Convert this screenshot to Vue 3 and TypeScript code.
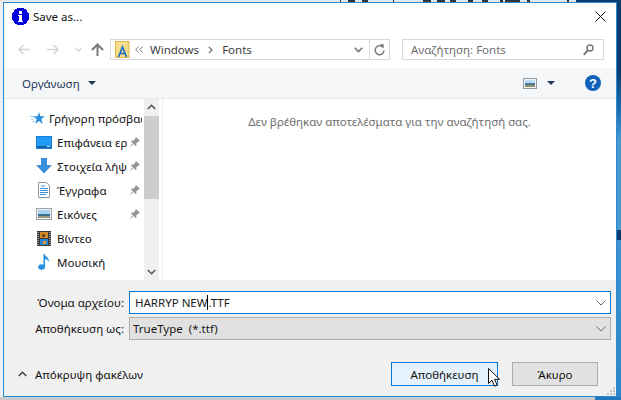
<script setup lang="ts">
interface NavItem {
  label: string;
  icon: string;
  pinned: boolean;
}

const navItems: NavItem[] = [
  { label: "Επιφάνεια εργασίας", icon: "desktop", pinned: true },
  { label: "Στοιχεία λήψης", icon: "download", pinned: true },
  { label: "Έγγραφα", icon: "docs", pinned: true },
  { label: "Εικόνες", icon: "pics", pinned: true },
  { label: "Βίντεο", icon: "video", pinned: false },
  { label: "Μουσική", icon: "music", pinned: false },
];

// the window behind the dialog only peeks out along the top edge
const behindBits = [
  [340, 1], [348, 7], [362, 6], [393, 1], [423, 8], [437, 8], [450, 6],
  [468, 5], [482, 6], [500, 3], [505, 15], [527, 3],
];
</script>

<template>
  <div class="desktop">
    <svg class="behind" width="621" height="2" viewBox="0 0 621 2">
      <rect v-for="b in behindBits" :key="b[0]" :x="b[0]" y="0" :width="b[1]" height="2" fill="#333" />
    </svg>
    <div class="window">
      <div class="titlebar">
        <svg class="info-icon" width="17" height="17" viewBox="0 0 17 17" shape-rendering="crispEdges">
          <path fill="#0000e0" d="M5 0h7v1h2v1h1v2h1v1h1v7h-1v1h-1v2h-1v1h-2v1H5v-1H3v-1H2v-2H1v-1H0V5h1V4h1V2h1V1h2z" />
          <path fill="#fff" d="M7 3h3v3H7zM6 7h4v6h1v1H6v-1h1V8H6z" />
        </svg>
        <span class="title">Save as...</span>
        <svg class="close" width="11" height="11" viewBox="0 0 11 11">
          <path d="M.5.5l10 10M10.500.5l-10 10" stroke="#111" stroke-width="1" fill="none" />
        </svg>
      </div>

      <div class="navbar">
        <svg class="nav-arrow" width="13" height="11" viewBox="0 0 13 11">
          <path d="M13 5.500H2M6.500 1L2 5.500 6.500 10" stroke="#d5d5d5" stroke-width="1.600" fill="none" />
        </svg>
        <svg class="nav-arrow fwd" width="13" height="11" viewBox="0 0 13 11">
          <path d="M0 5.500h11M6.500 1L11 5.500 6.500 10" stroke="#d5d5d5" stroke-width="1.600" fill="none" />
        </svg>
        <svg class="nav-drop" width="7" height="5" viewBox="0 0 7 5">
          <path d="M.5 1l3 3 3-3" stroke="#d5d5d5" stroke-width="1.300" fill="none" />
        </svg>
        <svg class="nav-up" width="13" height="13" viewBox="0 0 13 13">
          <path d="M6.500 13V2M1 7l5.500-5.500L12 7" stroke="#7a7a7a" stroke-width="2" fill="none" />
        </svg>
        <div class="address">
          <svg class="fonts-icon" width="15" height="17" viewBox="0 0 15 17">
            <rect x=".5" y=".5" width="13.500" height="16" fill="#f7dc87" stroke="#e2b64a" stroke-width="1" />
            <path d="M3 3h1M6 3h1M9 3h1M4 6h1M8 6h1" stroke="#fff6d5" stroke-width="1" />
            <path d="M3.500 16L7.500 6l4 10M5.200 12.500h4.600" stroke="#1b6fc9" stroke-width="1.700" fill="none" />
          </svg>
          <svg class="crumbs-more" width="8" height="7" viewBox="0 0 8 7">
            <path d="M3.500.5L.8 3.500l2.700 3M7.500.5L4.800 3.500l2.700 3" stroke="#777" stroke-width="1" fill="none" />
          </svg>
          <span class="crumb">Windows</span>
          <svg class="crumb-sep" width="5" height="8" viewBox="0 0 5 8">
            <path d="M.8.8L4 4 .8 7.200" stroke="#666" stroke-width="1.200" fill="none" />
          </svg>
          <span class="crumb">Fonts</span>
          <span class="grow"></span>
          <svg class="addr-drop" width="9" height="6" viewBox="0 0 9 6">
            <path d="M.7.8l3.800 3.800L8.300.8" stroke="#777" stroke-width="1.600" fill="none" />
          </svg>
          <div class="refresh">
            <svg width="11" height="12" viewBox="0 0 11 12">
              <path d="M8.800 3.200A4.400 4.400 0 1 0 10 6.500" stroke="#7a7a7a" stroke-width="1.500" fill="none" />
              <path d="M5.500 0.300h4.200v4.200z" fill="#7a7a7a" />
            </svg>
          </div>
        </div>
        <div class="search">
          <span>Αναζήτηση: Fonts</span>
          <svg width="11" height="12" viewBox="0 0 11 12">
            <circle cx="7" cy="4" r="3" stroke="#777" stroke-width="1.500" fill="none" />
            <path d="M4.800 6.300L.8 10.800" stroke="#777" stroke-width="2" />
          </svg>
        </div>
      </div>

      <div class="toolbar">
        <span class="organize">Οργάνωση</span>
        <span class="caret organize-caret"></span>
        <span class="grow"></span>
        <svg class="view-icon" width="14" height="11" viewBox="0 0 14 11">
          <rect x=".5" y=".5" width="13" height="10" fill="#f2f5f8" stroke="#8f9aa3" />
          <rect x="2" y="2" width="10" height="3" fill="#bcdcf5" />
          <rect x="2" y="5" width="10" height="2" fill="#47799b" />
          <rect x="2" y="7" width="10" height="2" fill="#8f8d6c" />
        </svg>
        <span class="caret view-caret"></span>
        <svg class="help" width="16" height="16" viewBox="0 0 16 16">
          <circle cx="8" cy="8" r="8" fill="#0f62b8" />
          <text x="8" y="12.500" text-anchor="middle" class="help-mark">?</text>
        </svg>
      </div>

      <div class="browser">
        <div class="nav-pane">
          <div class="nav-list">
            <div class="nav-head">
              <svg width="15" height="13" viewBox="0 0 15 13">
                <path fill="#2b8fe0" d="M9 0l1.400 4.200H15l-3.700 2.700L12.700 12 9 9l-3.700 3 1.400-5.100L3 4.200h4.600z" />
                <path d="M0 4.500h4M1 7h3.500M2 9.500h3" stroke="#9fd0f5" stroke-width="1" />
              </svg>
              <span class="head-label">Γρήγορη πρόσβαση</span>
            </div>
            <div v-for="item in navItems" :key="item.label" class="nav-item">
              <span class="nav-icon">
                <svg v-if="item.icon === 'desktop'" width="16" height="13" viewBox="0 0 16 13">
                  <rect x="0" y="0" width="16" height="13" fill="#1a7fd8" />
                  <rect x="1" y="1" width="14" height="9" fill="#1f9bf5" />
                  <rect x="1" y="10" width="14" height="2" fill="#15609f" />
                  <rect x="11" y="10" width="3" height="1" fill="#bfe3fb" />
                </svg>
                <svg v-else-if="item.icon === 'download'" width="16" height="16" viewBox="0 0 16 16">
                  <path fill="#3a8fdc" d="M5 0h6v7h5l-8 8.500L0 7h5z" />
                </svg>
                <svg v-else-if="item.icon === 'docs'" width="12" height="16" viewBox="0 0 12 16">
                  <path d="M.5.5h8l3 3v12H.5z" fill="#fbfcfd" stroke="#8b98a3" />
                  <path d="M3 4h4M2 6.500h8M2 8.500h8M2 10.500h8M2 12.500h6" stroke="#3b8fd9" stroke-width="1" />
                </svg>
                <svg v-else-if="item.icon === 'pics'" width="16" height="12" viewBox="0 0 16 12">
                  <rect x=".5" y=".5" width="15" height="11" fill="#eef1f3" stroke="#9aa3a9" />
                  <rect x="2" y="2" width="12" height="4" fill="#a9d3f2" />
                  <rect x="2" y="6" width="12" height="2" fill="#3d6f8f" />
                  <rect x="2" y="8" width="12" height="2" fill="#9c9a78" />
                </svg>
                <svg v-else-if="item.icon === 'video'" width="14" height="15" viewBox="0 0 14 15">
                  <rect width="14" height="15" fill="#3a3a3a" />
                  <rect x="3" y="1" width="8" height="6" fill="#d78a2a" />
                  <rect x="3" y="8" width="8" height="6" fill="#2e85cf" />
                  <path d="M1 1v13M13 1v13" stroke="#d8d8d8" stroke-width="1" stroke-dasharray="1 1" />
                  <rect x="5" y="3" width="3" height="3" fill="#6b4a1c" />
                  <rect x="6" y="10" width="3" height="3" fill="#e09a30" />
                </svg>
                <svg v-else width="12" height="16" viewBox="0 0 12 16">
                  <ellipse cx="3.600" cy="13" rx="3.400" ry="2.800" fill="#2391e6" />
                  <path d="M5.500 13V0h1.200c.4 2.600 4.600 3.600 4.200 8-.8-2-2.800-3-3.800-3v8z" fill="#2391e6" />
                </svg>
              </span>
              <span class="item-label">{{ item.label }}</span>
              <svg v-if="item.pinned" class="pin" width="10" height="10" viewBox="0 0 10 10">
                <path fill="#8f979d" d="M6 0l4 4-1 .8-.7-.3L6.200 6.600l.3 1.700-1 .8-2-2L.8 9.600 0 9.200l2.900-2.800-2-2 .8-1 1.700.3L5.500 1.600 5.200.9z" />
              </svg>
            </div>
          </div>
          <div class="scrollbar">
            <svg width="9" height="6" viewBox="0 0 9 6">
              <path d="M.8 5L4.500 1.300 8.200 5" stroke="#555" stroke-width="1.600" fill="none" />
            </svg>
            <div class="thumb"></div>
            <span class="grow"></span>
            <svg width="9" height="6" viewBox="0 0 9 6">
              <path d="M.8 1l3.700 3.700L8.200 1" stroke="#555" stroke-width="1.600" fill="none" />
            </svg>
          </div>
        </div>
        <div class="results">Δεν βρέθηκαν αποτελέσματα για την αναζήτησή σας.</div>
      </div>

      <div class="form">
        <div class="field-row first">
          <label class="field-label">Όνομα αρχείου:</label>
          <div class="field name-field">
            <span>HARRYP NEW<i class="text-caret"></i>.TTF</span>
            <span class="grow"></span>
            <svg width="10" height="6" viewBox="0 0 10 6">
              <path d="M.5.5L5 5 9.500.5" stroke="#666" stroke-width="1" fill="none" />
            </svg>
          </div>
        </div>
        <div class="field-row">
          <label class="field-label">Αποθήκευση ως:</label>
          <div class="field type-field">
            <span>TrueType&nbsp; (*.ttf)</span>
            <span class="grow"></span>
            <svg width="10" height="6" viewBox="0 0 10 6">
              <path d="M.5.5L5 5 9.500.5" stroke="#666" stroke-width="1" fill="none" />
            </svg>
          </div>
        </div>
        <div class="actions">
          <svg class="hide-chevron" width="9" height="6" viewBox="0 0 9 6">
            <path d="M.8 5L4.500 1.300 8.200 5" stroke="#444" stroke-width="1.600" fill="none" />
          </svg>
          <span class="hide-label">Απόκρυψη φακέλων</span>
          <span class="grow"></span>
          <button class="btn primary">Αποθήκευση</button>
          <button class="btn cancel">Άκυρο</button>
        </div>
        <svg class="grip" width="9" height="9" viewBox="0 0 9 9" shape-rendering="crispEdges">
          <path fill="#c4c4c4" d="M6 0h2v2H6zM3 3h2v2H3zM6 3h2v2H6zM0 6h2v2H0zM3 6h2v2H3zM6 6h2v2H6z" />
        </svg>
        <svg class="pointer" width="13" height="19" viewBox="0 0 13 19">
          <path d="M.5.5v15l3.500-3.300 2.500 6 2.600-1.100-2.500-5.800h5z" fill="#fff" stroke="#111" stroke-width="1" />
        </svg>
      </div>
    </div>
  </div>
</template>

<style>
html,
body {
  margin: 0;
  overflow: hidden;
}
</style>

<style scoped>
.desktop {
  position: relative;
  box-sizing: border-box;
  width: 621px;
  height: 400px;
  padding: 2px 4px 3px 3px;
  font-family: "Noto Sans", "Open Sans", sans-serif;
  font-size: 11.5px;
  color: #1a1a1a;
  background:
    linear-gradient(to right, #e8e8e8 567px, #333 567px, #333 569px, #e8e8e8 569px, #e8e8e8 576px, #0c3c6e 576px) no-repeat top / 100% 2px,
    linear-gradient(to right, #c9c9c9 595px, #1f78bd 595px) no-repeat bottom / 100% 3px,
    linear-gradient(to bottom, #0c3c6e 0, #0c3c6e 70px, #1a6fb0 110px, #4a9ad0 140px, #4a9ad0 230px, #0c3c6e 230px, #0c3c6e 240px, #3f94cf 240px, #2a86c8 400px) no-repeat right / 4px 100%,
    #eeeeee;
}

.behind {
  position: absolute;
  left: 0;
  top: 0;
}

.window {
  position: relative;
  display: flex;
  flex-direction: column;
  height: 100%;
  box-sizing: border-box;
  border: 1px solid #2a8ad4;
  background: #fff;
}

.grow {
  flex: 1;
}

.titlebar {
  display: flex;
  align-items: center;
  height: 27px;
  padding: 0 8px 0 8px;
  flex-shrink: 0;
}

.title {
  margin-left: 4px;
  flex: 1;
  color: #111;
}

.close {
  margin-right: 2px;
}

.navbar {
  display: flex;
  align-items: flex-start;
  height: 38px;
  padding: 9px 12px 0 13px;
  box-sizing: border-box;
  flex-shrink: 0;
}

.nav-arrow {
  margin-top: 5px;
}

.nav-arrow.fwd {
  margin-left: 17px;
}

.nav-drop {
  margin: 8px 0 0 15px;
}

.nav-up {
  margin: 4px 0 0 9px;
}

.address {
  display: flex;
  align-items: center;
  box-sizing: border-box;
  width: 280px;
  height: 21px;
  margin-left: 6px;
  border: 1px solid #d9d9d9;
  padding-left: 4px;
  color: #333;
}

.crumbs-more {
  margin-left: 5px;
}

.crumb {
  margin-left: 7px;
  color: #3c3c3c;
  margin-top: -1px;
}

.crumb-sep {
  margin-left: 9px;
  margin-right: 2px;
}

.addr-drop {
  margin-right: 3px;
}

.refresh {
  display: flex;
  align-items: center;
  justify-content: center;
  height: 100%;
  width: 20px;
  margin-left: 3px;
  border-left: 1px solid #d9d9d9;
  box-sizing: border-box;
}

.search {
  display: flex;
  align-items: center;
  justify-content: space-between;
  box-sizing: border-box;
  width: 202px;
  height: 21px;
  margin-left: 12px;
  border: 1px solid #d9d9d9;
  padding: 0 9px 0 8px;
  color: #6d6d6d;
}

.toolbar {
  display: flex;
  align-items: center;
  box-sizing: border-box;
  height: 31px;
  padding: 0 15px 0 18px;
  background: #f5f6f7;
  border-bottom: 1px solid #e6e8ea;
  flex-shrink: 0;
}

.organize {
  color: #1e395b;
}

.caret {
  width: 0;
  height: 0;
  border-left: 4px solid transparent;
  border-right: 4px solid transparent;
  border-top: 4px solid #1e395b;
}

.organize-caret {
  margin-left: 8px;
}

.view-caret {
  margin: 0 30px 0 10px;
}

.help-mark {
  font-family: "Liberation Sans", sans-serif;
  font-size: 13px;
  font-weight: 700;
  fill: #fff;
}

.browser {
  display: flex;
  flex: 1;
  min-height: 0;
}

.nav-pane {
  display: flex;
  width: 156px;
  box-sizing: border-box;
  border-right: 1px solid #fff;
  flex-shrink: 0;
}

.nav-list {
  width: 140px;
  padding-top: 8px;
  flex-shrink: 0;
  overflow: hidden;
}

.nav-head {
  display: flex;
  align-items: center;
  height: 23px;
  padding-left: 26px;
  white-space: nowrap;
}

.head-label {
  margin-left: 4px;
  width: 93px;
  overflow: hidden;
  color: #111;
}

.nav-item {
  display: flex;
  align-items: center;
  height: 24px;
  padding-left: 32px;
  white-space: nowrap;
}

.nav-icon {
  display: flex;
  justify-content: center;
  width: 16px;
  flex-shrink: 0;
}

.item-label {
  width: 70px;
  margin-left: 5px;
  overflow: hidden;
  color: #111;
}

.pin {
  margin-left: 3px;
  margin-top: -1px;
}

.scrollbar {
  display: flex;
  flex-direction: column;
  align-items: center;
  width: 15px;
  background: #f0f0f0;
  padding: 5px 0 5px;
  box-sizing: border-box;
  flex-shrink: 0;
}

.thumb {
  width: 15px;
  height: 83px;
  margin-top: 6px;
  background: #cdcdcd;
}

.results {
  flex: 1;
  padding-top: 15px;
  text-align: center;
  color: #6d6d6d;
  border-left: 1px solid #ededed;
  margin-left: 2px;
}

.form {
  position: relative;
  box-sizing: border-box;
  height: 116px;
  padding: 11px 5px 0 0;
  background: #f0f0f0;
  flex-shrink: 0;
}

.field-row {
  display: flex;
  align-items: center;
  margin-top: 3px;
}

.field-row.first {
  margin-top: 0;
}

.field-label {
  width: 120px;
  text-align: right;
  color: #111;
}

.field {
  display: flex;
  align-items: center;
  flex: 1;
  box-sizing: border-box;
  height: 23px;
  margin-left: 5px;
  padding-right: 4px;
}

.name-field {
  background: #fff;
  border: 1px solid #0078d7;
  padding-left: 5px;
}

.type-field {
  background: #e1e1e1;
  border: 1px solid #adadad;
  padding-left: 3px;
}

.text-caret {
  display: inline-block;
  width: 0;
  height: 15px;
  border-left: 1px solid #000;
  vertical-align: -3px;
}

.actions {
  display: flex;
  align-items: center;
  margin-top: 22px;
  padding-right: 13px;
}

.hide-chevron {
  margin-left: 14px;
}

.hide-label {
  margin-left: 8px;
  color: #111;
}

.btn {
  box-sizing: border-box;
  height: 24px;
  font: inherit;
  color: #111;
  padding: 0;
}

.primary {
  width: 107px;
  background: #e5f1fb;
  border: 1px solid #0078d7;
}

.cancel {
  width: 86px;
  margin-left: 14px;
  background: #e1e1e1;
  border: 1px solid #adadad;
}

.grip {
  position: absolute;
  right: 0;
  bottom: 0;
}

.pointer {
  position: absolute;
  left: 484px;
  top: 88px;
}
</style>
